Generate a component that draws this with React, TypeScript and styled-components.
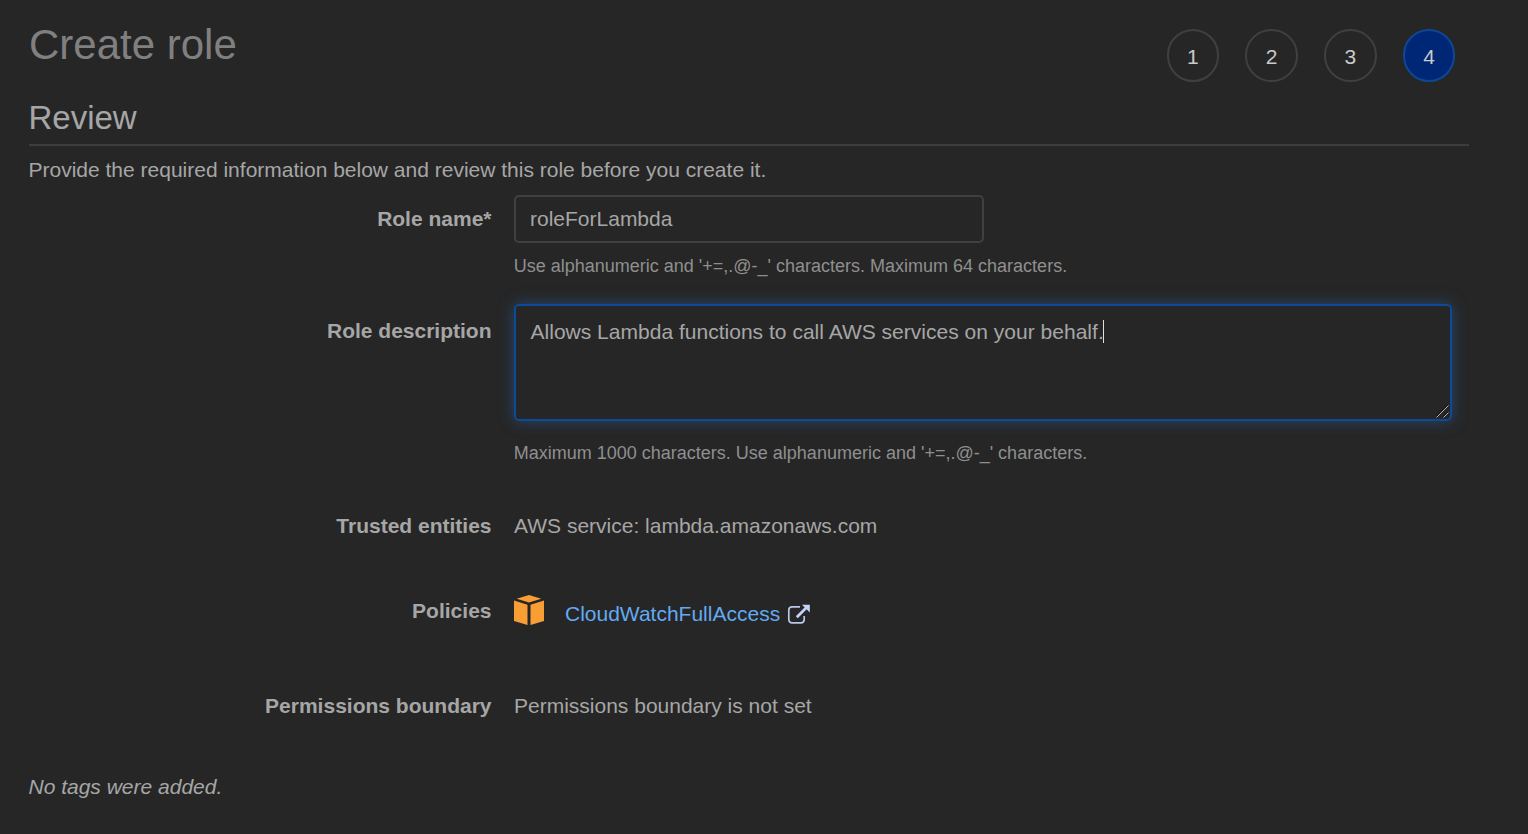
import React from 'react';
import styled, { createGlobalStyle } from 'styled-components';

const GlobalStyle = createGlobalStyle`
  * { box-sizing: border-box; }
  html, body { margin: 0; background: #262626; }
  body {
    font-family: "Liberation Sans", Arial, sans-serif;
    font-size: 21px;
    line-height: 30px;
    color: #a6a6a6;
    overflow: hidden;
  }
`;

const Page = styled.main`
  height: 834px;
  padding: 15px 59px 0 28.5px;
  background: #262626;
`;

const Header = styled.header`
  display: flex;
  justify-content: space-between;
  height: 80px;
`;

const Title = styled.h1`
  margin: 0;
  padding-left: 0.5px;
  font-size: 42px;
  line-height: 60px;
  font-weight: 400;
  color: #808080;
`;

const Steps = styled.ol`
  display: flex;
  gap: 26.25px;
  list-style: none;
  margin: 14.25px 13.75px 0 0;
  padding: 0;
`;

const Step = styled.li<{ $active?: boolean }>`
  width: 52.5px;
  height: 52.5px;
  border: 2px solid ${(p) => (p.$active ? '#0d4795' : '#404040')};
  border-radius: 50%;
  background: ${(p) => (p.$active ? '#002776' : 'transparent')};
  color: #cacaca;
  line-height: 52px;
  text-align: center;
`;

const SectionTitle = styled.h2`
  margin: 0;
  height: 51px;
  border-bottom: 2px solid #3d3d3d;
  font-size: 33px;
  line-height: 45px;
  font-weight: 400;
`;

const Intro = styled.p`
  margin: 9px 0 10px;
`;

const Row = styled.div<{ $height: number }>`
  display: grid;
  grid-template-columns: 463px 1fr;
  column-gap: 22.5px;
  height: ${(p) => p.$height}px;
`;

const Label = styled.label<{ $offset?: number }>`
  padding-top: ${(p) => p.$offset ?? 0}px;
  font-weight: 700;
  text-align: right;
`;

const Input = styled.input`
  display: block;
  width: 470px;
  height: 48px;
  padding: 0 14px;
  border: 2px solid #404040;
  border-radius: 5px;
  background: #262626;
  color: #a6a6a6;
  font: inherit;
  outline: none;
`;

const Description = styled.div`
  position: relative;
  display: flex;
  align-items: flex-start;
  width: 938px;
  height: 117px;
  padding: 11px 14.5px;
  border: 2px solid #0d4a99;
  border-radius: 5px;
  box-shadow: 0 0 15px rgba(39, 100, 170, 0.55);
`;

const DescriptionText = styled.span`
  letter-spacing: 0.015px;
`;

const Caret = styled.span`
  width: 1px;
  height: 23px;
  margin: 3px 0 0 -0.5px;
  background: #e0e0e0;
`;

const Grip = styled.svg`
  position: absolute;
  right: 1px;
  bottom: 1px;
`;

const Hint = styled.p<{ $gap: number }>`
  margin: ${(p) => p.$gap}px 0 0 -0.25px;
  font-size: 18px;
  line-height: 26px;
  color: #8f8f8f;
`;

const Policy = styled.div`
  display: flex;
  align-items: flex-start;
`;

const PolicyLink = styled.a`
  margin: 4px 7px 0 21px;
  color: #63aaf2;
`;

const ExternalIcon = styled.svg`
  margin-top: 9px;
`;

const TagNote = styled.p`
  margin: 0;
  font-style: italic;
`;

const Cube = styled.svg`
  display: block;
  flex: none;
`;

const CubeIcon = () => (
  <Cube width="30" height="30" viewBox="0 0 30 30">
    <g fill="#f89e35">
      <path d="M15 0L27.3 3.7L15 7.6L2.7 3.7Z" />
      <path d="M0 5.5L13.5 9.8V30L0 26Z" />
      <path d="M30 5.5L16.5 9.8V30L30 26Z" />
    </g>
  </Cube>
);

export default function App() {
  return (
    <>
      <GlobalStyle />
      <Page>
        <Header>
          <Title>Create role</Title>
          <Steps>
            <Step>1</Step>
            <Step>2</Step>
            <Step>3</Step>
            <Step $active>4</Step>
          </Steps>
        </Header>
        <SectionTitle>Review</SectionTitle>
        <Intro>Provide the required information below and review this role before you create it.</Intro>
        <Row $height={109}>
          <Label $offset={9} htmlFor="name">Role name*</Label>
          <div>
            <Input id="name" defaultValue="roleForLambda" />
            <Hint $gap={10}>Use alphanumeric and '+=,.@-_' characters. Maximum 64 characters.</Hint>
          </div>
        </Row>
        <Row $height={207}>
          <Label $offset={12}>Role description</Label>
          <div>
            <Description>
              <DescriptionText>Allows Lambda functions to call AWS services on your behalf.</DescriptionText>
              <Caret />
              <Grip width="13" height="13" viewBox="0 0 13 13">
                <path d="M0 11.5L11.5 0M7 11.5L11.5 7" stroke="#111" />
                <path d="M0.5 12.5L12.5 0.5M7.5 12.5L12.5 7.5" stroke="#b5b5b5" />
              </Grip>
            </Description>
            <Hint $gap={19}>Maximum 1000 characters. Use alphanumeric and '+=,.@-_' characters.</Hint>
          </div>
        </Row>
        <Row $height={84}>
          <Label>Trusted entities</Label>
          <div>AWS service: lambda.amazonaws.com</div>
        </Row>
        <Row $height={96}>
          <Label $offset={1}>Policies</Label>
          <Policy>
            <CubeIcon />
            <PolicyLink>CloudWatchFullAccess</PolicyLink>
            <ExternalIcon width="24" height="21" viewBox="0 0 24 21">
              <path
                d="M13 2.8H5.2Q1.8 2.8 1.8 6V15.6Q1.8 18.9 5.2 18.9H14Q17.2 18.9 17.2 15.6V12"
                fill="none"
                stroke="#b9c5ea"
                strokeWidth="1.7"
              />
              <path d="M9.8 13.2L19 4" stroke="#c6d2fb" strokeWidth="2.7" />
              <path d="M15 0.7H22.8V8.5Z" fill="#c6d2fb" />
            </ExternalIcon>
          </Policy>
        </Row>
        <Row $height={81}>
          <Label>Permissions boundary</Label>
          <div>Permissions boundary is not set</div>
        </Row>
        <TagNote>No tags were added.</TagNote>
      </Page>
    </>
  );
}
